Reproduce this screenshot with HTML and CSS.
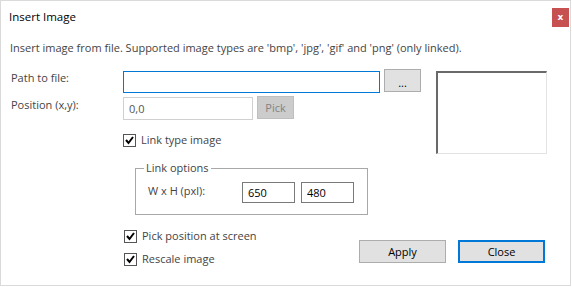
FILE: index.html
```
<!DOCTYPE html>
<html lang="en">
<head>
  <meta charset="UTF-8" />
  <title>Insert Image</title>
  <link rel="stylesheet" href="styles.css">
</head>
<body>
  <div class="window">
    <div class="titlebar">
      <span class="title">Insert Image</span>
      <button class="close-btn">x</button>
    </div>

    <p class="desc">Insert image from file. Supported image types are 'bmp', 'jpg', 'gif' and 'png' (only linked).</p>

    <div class="main">
      <div class="form">
        <div class="row row-path">
          <label class="label">Path to file:</label>
          <input class="field field-path" type="text">
          <button class="btn btn-browse">...</button>
        </div>
        <div class="row row-pos">
          <label class="label">Position (x,y):</label>
          <input class="field field-pos" type="text" value="0,0">
          <button class="btn btn-pick" disabled>Pick</button>
        </div>
        <label class="check check-link">
          <span class="box"><svg width="11" height="11" viewBox="0 0 11 11"><path d="M2 5 L4.5 8 L9 2" fill="none" stroke="#000" stroke-width="2"/></svg></span>
          Link type image
        </label>
        <fieldset class="group">
          <legend>Link options</legend>
          <div class="row row-size">
            <span class="label-size">W x H (pxl):</span>
            <input class="field field-num" type="text" value="650">
            <input class="field field-num" type="text" value="480">
          </div>
        </fieldset>
      </div>
      <div class="preview"></div>
    </div>

    <div class="footer">
      <div class="checks">
        <label class="check">
          <span class="box"><svg width="11" height="11" viewBox="0 0 11 11"><path d="M2 5 L4.5 8 L9 2" fill="none" stroke="#000" stroke-width="2"/></svg></span>
          Pick position at screen
        </label>
        <label class="check">
          <span class="box"><svg width="11" height="11" viewBox="0 0 11 11"><path d="M2 5 L4.5 8 L9 2" fill="none" stroke="#000" stroke-width="2"/></svg></span>
          Rescale image
        </label>
      </div>
      <div class="actions">
        <button class="btn btn-action">Apply</button>
        <button class="btn btn-action btn-default">Close</button>
      </div>
    </div>
  </div>
</body>
</html>
```

FILE: styles.css
```
* {
  margin: 0;
  padding: 0;
  box-sizing: border-box;
}
body {
  background-color: #fff;
  font-family: "Open Sans", "Noto Sans", sans-serif;
  font-size: 11px;
  color: #444;
}
.window {
  width: 571px;
  height: 286px;
  border: 1px solid #dadada;
  display: flex;
  flex-direction: column;
}
.titlebar {
  height: 31px;
  display: flex;
  justify-content: space-between;
  align-items: flex-start;
  padding: 7px 1px 0 8px;
}
.title {
  margin-top: 1px;
  line-height: 16px;
  font-size: 11.5px;
  color: #000;
}
.close-btn {
  width: 17px;
  height: 19px;
  border: none;
  background: #c75050;
  color: #fff;
  font-family: "DejaVu Sans", sans-serif;
  font-size: 9px;
  font-weight: bold;
  line-height: 17px;
}
.desc {
  margin-top: 8px;
  padding-left: 9px;
  line-height: 16px;
}
.main {
  display: flex;
  margin-top: 13px;
  padding-left: 10px;
}
.form {
  width: 410px;
}
.row {
  display: flex;
  align-items: flex-start;
}
.label {
  width: 112px;
  line-height: 16px;
  margin-top: 1px;
}
.field {
  font-family: "Open Sans", "Noto Sans", sans-serif;
  font-size: 11px;
  color: #444;
  background: #fff;
  padding: 0 5px;
  outline: none;
}
.field-path {
  width: 257px;
  height: 22px;
  margin-top: 2px;
  border: 1px solid #0078d7;
}
.btn {
  font-family: "Open Sans", "Noto Sans", sans-serif;
  font-size: 11px;
  color: #000;
  background: #e1e1e1;
  border: 1px solid #adadad;
}
.btn-browse {
  width: 37px;
  height: 23px;
  margin-left: 4px;
  line-height: 26px;
}
.row-pos {
  margin-top: 3px;
}
.field-pos {
  width: 130px;
  height: 23px;
  margin-top: 1px;
  border: 1px solid #d0d0d0;
  color: #555;
}
.btn-pick {
  width: 37px;
  height: 23px;
  margin-left: 4px;
  background: #cccccc;
  border-color: #bfbfbf;
  color: #838383;
}
.check {
  display: flex;
  align-items: center;
  line-height: 16px;
  gap: 5px;
}
.check-link {
  margin: 12px 0 0 112px;
}
.box {
  width: 13px;
  height: 13px;
  border: 1px solid #555;
  background: #fff;
  display: flex;
}
.group {
  margin: 12px 0 0 124px;
  width: 233px;
  height: 55px;
  border: 1px solid #a8a8a8;
  padding: 0 0 0 12px;
}
.group legend {
  margin-left: -4px;
  padding: 0 2px;
  line-height: 16px;
}
.row-size {
  margin-top: 6px;
}
.label-size {
  width: 94px;
  line-height: 16px;
  margin-top: 1px;
}
.field-num {
  width: 53px;
  height: 21px;
  border: 1px solid #7a7a7a;
  margin-right: 6px;
  color: #000;
}
.preview {
  width: 111px;
  height: 83px;
  margin: 2px 0 0 15px;
  border-style: solid;
  border-width: 2px 1px 1px 2px;
  border-color: #696969 #e3e3e3 #e3e3e3 #696969;
}
.footer {
  display: flex;
  justify-content: space-between;
  align-items: flex-start;
  margin-top: 13px;
  padding: 0 25px 0 123px;
}
.checks {
  display: flex;
  flex-direction: column;
  gap: 7px;
}
.actions {
  display: flex;
  gap: 12px;
  margin-top: 12px;
}
.btn-action {
  width: 87px;
  height: 23px;
}
.btn-default {
  border: 2px solid #0078d7;
}
```
